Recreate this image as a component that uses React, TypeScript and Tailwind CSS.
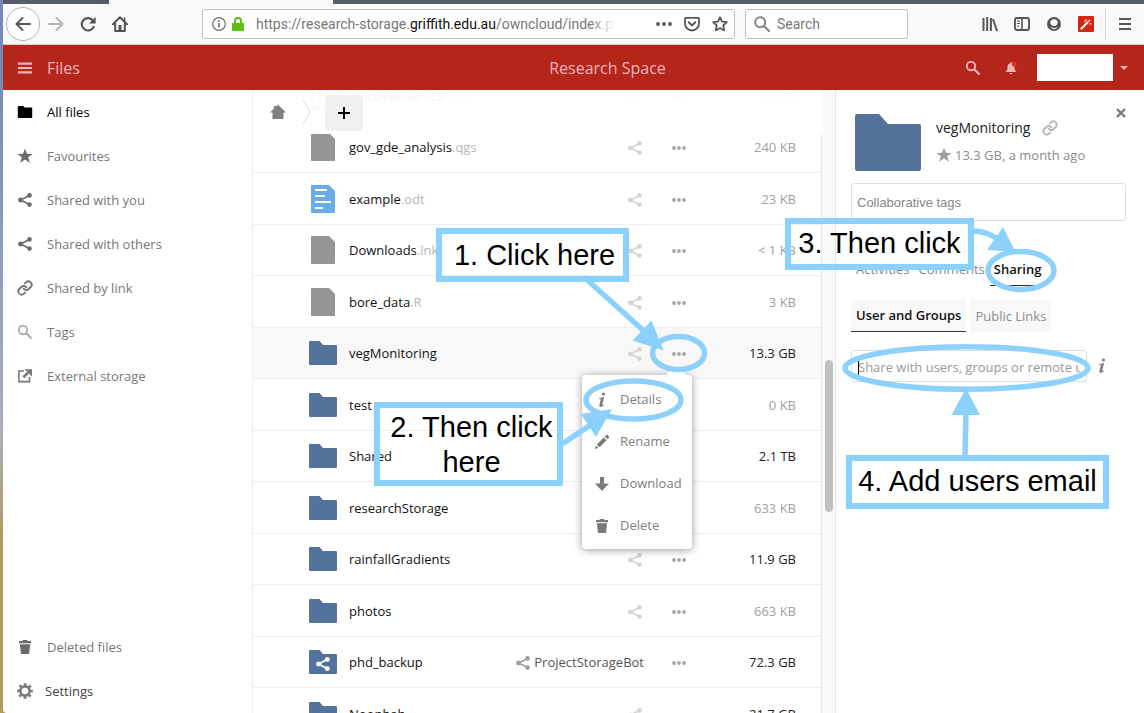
import React from "react";
import { Link as LinkIcon } from "lucide-react";

type IconProps = { className?: string };

const ShareIcon = ({ className = "" }: IconProps) => (
  <svg viewBox="0 0 14 14" className={"size-3.5 shrink-0 " + className} fill="currentColor" stroke="currentColor" aria-hidden>
    <path d="M11.5 2.4 2.5 7l9 4.6" fill="none" strokeWidth="1.7" />
    <g stroke="none">
      <circle cx="11.5" cy="2.4" r="2.3" />
      <circle cx="11.5" cy="11.6" r="2.3" />
      <circle cx="2.5" cy="7" r="2.4" />
    </g>
  </svg>
);

const StarIcon = ({ className = "" }: IconProps) => (
  <svg viewBox="0 0 16 16" className={"size-4 shrink-0 " + className} fill="currentColor" aria-hidden>
    <path d="m8 .6 2 5.1 5.6.2-4.4 3.4 1.6 5.4L8 11.6l-4.8 3.1 1.6-5.4L.4 5.9 6 5.7z" />
  </svg>
);

const MagnifierIcon = ({ className = "" }: IconProps) => (
  <svg viewBox="0 0 16 16" className={"size-4 shrink-0 " + className} fill="none" stroke="currentColor" aria-hidden>
    <circle cx="6" cy="6" r="4.2" strokeWidth="1.9" />
    <path d="m9 9 5.5 5.5" strokeWidth="2.3" />
  </svg>
);

const SmallFolderIcon = ({ className = "" }: IconProps) => (
  <svg viewBox="0 0 16 16" className={"size-4 shrink-0 " + className} fill="currentColor" aria-hidden>
    <path d="M1.6 2h4.6l1.6 1.6h6.6q.8 0 .8.8v8.8q0 .8-.8.8H1.6q-.8 0-.8-.8V2.8q0-.8.8-.8z" />
  </svg>
);

const ChainIcon = ({ className = "" }: IconProps) => (
  <LinkIcon className={"size-4 shrink-0 " + className} strokeWidth={2.8} aria-hidden />
);

const ExternalIcon = ({ className = "" }: IconProps) => (
  <svg viewBox="0 0 16 16" className={"size-4 shrink-0 " + className} fill="none" stroke="currentColor" aria-hidden>
    <path d="M7 3H1.9v10.6h10.6V9" strokeWidth="1.6" />
    <path d="M6.3 9.2 11 4.7" strokeWidth="2.6" />
    <path d="M7.5 1.2H15v7.2z" fill="currentColor" stroke="none" />
  </svg>
);

const TrashIcon = ({ className = "" }: IconProps) => (
  <svg viewBox="0 0 16 16" className={"size-4 shrink-0 " + className} fill="currentColor" aria-hidden>
    <path d="M6 1h4l.6 1H14v2.2H2V2h3.4zM2.8 5.2h10.4L12 15H4z" />
  </svg>
);

const GearIcon = ({ className = "" }: IconProps) => (
  <svg viewBox="0 0 16 16" className={"size-4 shrink-0 " + className} fill="none" stroke="currentColor" aria-hidden>
    <circle cx="8" cy="8" r="4.6" strokeWidth="2.6" />
    <circle cx="8" cy="8" r="6.7" strokeWidth="2.2" strokeDasharray="2.8 2.46" strokeDashoffset="1.4" />
  </svg>
);

const InfoIcon = ({ className = "" }: IconProps) => (
  <svg viewBox="0 0 16 16" className={"size-4 shrink-0 " + className} fill="currentColor" aria-hidden>
    <circle cx="9.5" cy="2" r="1.6" />
    <path d="M4.800 6.200 10.200 5 8.200 12.600c-.2.8.2.9 1.700-.3l.3.5C8.400 15.200 4.800 15.900 5.400 13l1.300-5.200c.2-.9 0-1.100-1.800-.9z" />
  </svg>
);

const PencilIcon = ({ className = "" }: IconProps) => (
  <svg viewBox="0 0 16 16" className={"size-4 shrink-0 " + className} fill="currentColor" aria-hidden>
    <path d="M12 1.200q.8-.8 1.600 0l1.200 1.200q.8.8 0 1.600l-1.300 1.300-2.800-2.800zM9.800 3.400l2.800 2.800-7 7-2.800-2.800zM2 11.400 4.600 14 1 15z" />
  </svg>
);

const DownloadIcon = ({ className = "" }: IconProps) => (
  <svg viewBox="0 0 16 16" className={"size-4 shrink-0 " + className} fill="currentColor" aria-hidden>
    <path d="M6 1h4v6.500h5L8 15 1 7.500h5z" />
  </svg>
);

const DotsIcon = ({ className = "" }: IconProps) => (
  <svg viewBox="0 0 14 14" className={"size-3.5 shrink-0 " + className} fill="currentColor" aria-hidden>
    <circle cx="2" cy="7" r="1.900" />
    <circle cx="7" cy="7" r="1.900" />
    <circle cx="12" cy="7" r="1.900" />
  </svg>
);

const CloseIcon = () => (
  <svg viewBox="0 0 10 10" className="size-2.5" fill="none" stroke="currentColor" strokeWidth="2.4" aria-hidden>
    <path d="m1 1 8 8M9 1 1 9" />
  </svg>
);

function Folder({ shared = false }: { shared?: boolean }) {
  return (
    <svg viewBox="0 0 28 24" className="h-6 w-7" aria-hidden>
      <path d="M1 0h9.500L14 4h13q1 0 1 1v18q0 1-1 1H1q-1 0-1-1V1q0-1 1-1z" fill="#54739c" />
      {shared && (
        <g fill="#fff" stroke="#fff">
          <path d="M18.500 9.300 9.500 14l9 4.700" fill="none" strokeWidth="1.800" />
          <circle cx="18.300" cy="9.400" r="2" />
          <circle cx="18.300" cy="18.600" r="2" />
          <circle cx="9.500" cy="14" r="2" />
        </g>
      )}
    </svg>
  );
}

function FileShape({ kind }: { kind: "plain" | "text" | "sheet" }) {
  const fill = kind === "text" ? "#68ace9" : kind === "sheet" ? "#9bc651" : "#969696";
  return (
    <svg viewBox="0 0 24 28" className="h-7 w-6" aria-hidden>
      <path d="M.8 0H18l6 6v21.200q0 .8-.8.8H.8q-.8 0-.8-.8V.8Q0 0 .8 0z" fill={fill} />
      {kind === "text" && <path d="M4 5h12M4 11h10M4 17h16M4 23h8" stroke="#fff" strokeWidth="2" />}
      {kind === "sheet" && <path d="M5 8h14v14H5zM5 15h14M12 8v14" stroke="#fff" strokeWidth="2" fill="none" />}
    </svg>
  );
}

type Row = {
  name: string;
  ext?: string;
  size: string;
  big?: boolean;
  kind: "plain" | "text" | "sheet" | "folder" | "shared";
  owner?: string;
  open?: boolean;
};

const rows: Row[] = [
  { name: "InactiveUsersLS", ext: ".xlsx", size: "28 KB", kind: "sheet" },
  { name: "gov_gde_analysis", ext: ".qgs", size: "240 KB", kind: "plain" },
  { name: "example", ext: ".odt", size: "23 KB", kind: "text" },
  { name: "Downloads", ext: ".lnk", size: "< 1 KB", kind: "plain" },
  { name: "bore_data", ext: ".R", size: "3 KB", kind: "plain" },
  { name: "vegMonitoring", size: "13.3 GB", big: true, kind: "folder", open: true },
  { name: "test", size: "0 KB", kind: "folder" },
  { name: "Shared", size: "2.1 TB", big: true, kind: "folder" },
  { name: "researchStorage", size: "633 KB", kind: "folder" },
  { name: "rainfallGradients", size: "11.9 GB", big: true, kind: "folder" },
  { name: "photos", size: "663 KB", kind: "folder" },
  { name: "phd_backup", size: "72.3 GB", big: true, kind: "shared", owner: "ProjectStorageBot" },
  { name: "Noonbah", size: "21.7 GB", big: true, kind: "folder" },
];

const menuItems = [
  { label: "Details", Icon: InfoIcon },
  { label: "Rename", Icon: PencilIcon },
  { label: "Download", Icon: DownloadIcon },
  { label: "Delete", Icon: TrashIcon },
];

function ActionsMenu() {
  return (
    <div className="absolute top-7 -right-1.5 z-10 w-[110px] rounded-sm bg-white pt-1 pb-0.5 shadow-[0_1px_8px_rgba(0,0,0,0.4)]">
      <svg viewBox="0 0 20 10" className="absolute -top-2.5 right-1.5 h-2.5 w-5" fill="#fff" aria-hidden>
        <path d="M0 10 10 0l10 10z" />
      </svg>
      {menuItems.map(({ label, Icon }) => (
        <button key={label} type="button" className="flex h-[42px] w-full items-center gap-2.5 pl-3 text-left text-[#808080]">
          <Icon className="text-[#7a7a7a]" />
          {label}
        </button>
      ))}
    </div>
  );
}

function FileRow({ row }: { row: Row }) {
  const cell = "border-b border-[#eee] p-0";
  return (
    <tr className={"odd:h-[52px] even:h-[51px] " + (row.open ? "bg-[#f8f8f8]" : "")}>
      <td className={cell}>
        <div className="flex items-center gap-3 pl-14">
          <span className="flex w-7 justify-center">
            {row.kind === "folder" || row.kind === "shared" ? <Folder shared={row.kind === "shared"} /> : <FileShape kind={row.kind} />}
          </span>
          <a href="#file" className="pt-0.5 text-[#111]">
            {row.name}
            {row.ext && <span className="text-[#b8b8b8]">{row.ext}</span>}
          </a>
        </div>
      </td>
      <td className={cell}>
        <div className="flex items-center justify-end gap-7 pt-0.5">
          {row.owner ? (
            <button type="button" className="flex items-center gap-1 text-[#555]">
              <ShareIcon className="text-[#a0a0a0]" />
              {row.owner}
            </button>
          ) : (
            <button type="button" aria-label="Share" className="pr-0.5 text-[#d4d4d4]">
              <ShareIcon />
            </button>
          )}
          <div className="relative flex">
            <button type="button" aria-label="Actions" className="text-[#a6a6a6]">
              <DotsIcon />
            </button>
            {row.open && <ActionsMenu />}
          </div>
        </div>
      </td>
      <td className={cell + " w-[135px] pt-0.5 pr-[25px] text-right whitespace-nowrap " + (row.big ? "text-[#222]" : "text-[#a0a0a0]")}>{row.size}</td>
    </tr>
  );
}

function BrowserBar() {
  return (
    <>
      <div className="flex h-1 shrink-0 bg-[#565b64]">
        <div className="ml-[106px] w-56 bg-[#f9f9fa]" />
      </div>
      <div className="flex h-[41px] shrink-0 items-center border-b border-[#d0d0d2] bg-[#f9f9fa] pl-[3px] pr-3 font-['Roboto',sans-serif] text-[#555]">
        <button type="button" aria-label="Back" className="flex size-[34px] items-center justify-center rounded-full border border-[#b4b4b4] bg-white">
          <svg viewBox="0 0 16 16" className="size-4" fill="none" stroke="currentColor" strokeWidth="2" strokeLinecap="round" strokeLinejoin="round">
            <path d="M15 8H1.500M7.500 2l-6 6 6 6" />
          </svg>
        </button>
        <button type="button" aria-label="Forward" className="ml-2 text-[#b8b8b8]">
          <svg viewBox="0 0 16 16" className="size-4" fill="none" stroke="currentColor" strokeWidth="2" strokeLinecap="round" strokeLinejoin="round">
            <path d="M1 8h13.500M8.500 2l6 6-6 6" />
          </svg>
        </button>
        <button type="button" aria-label="Reload" className="ml-4">
          <svg viewBox="0 0 16 16" className="size-4" fill="none" stroke="currentColor" strokeWidth="2.200">
            <path d="M13.200 4.800A6.200 6.200 0 1 0 14 10" />
            <path d="M15.600 1v6.500H9z" fill="currentColor" stroke="none" />
          </svg>
        </button>
        <button type="button" aria-label="Home" className="ml-4">
          <svg viewBox="0 0 16 16" className="size-4" fill="none" stroke="currentColor" strokeWidth="2" strokeLinejoin="round" strokeLinecap="round">
            <path d="M1 8.200 8 1.200l7 7M3.200 7.500V15h9.600V7.500" />
            <path d="M12.500 2v3" strokeWidth="1.600" />
            <path d="M8 9v6" strokeWidth="3" strokeLinecap="butt" />
          </svg>
        </button>
        <div className="ml-[74px] flex h-[30px] min-w-0 flex-1 items-center rounded-[3px] border border-[#c3c3c5] bg-white pl-[9px] pr-1.5">
          <svg viewBox="0 0 14 14" className="size-3.5 shrink-0 text-[#6a6a6a]" fill="none" stroke="currentColor" strokeWidth="1.200" aria-hidden>
            <circle cx="7" cy="7" r="6.300" />
            <path d="M7 6v4.200" strokeWidth="1.600" />
            <path d="M7 3.300v1.700" strokeWidth="1.600" />
          </svg>
          <svg viewBox="0 0 12 14" className="ml-1.5 h-3.5 w-3 shrink-0 text-[#5fbf10]" fill="currentColor" aria-hidden>
            <path d="M1 6h10q1 0 1 1v6q0 1-1 1H1q-1 0-1-1V7q0-1 1-1z" />
            <path d="M3 7V4a3 3 0 0 1 6 0v3" fill="none" stroke="currentColor" strokeWidth="2" />
          </svg>
          <div className="ml-3 min-w-0 flex-1 text-sm whitespace-nowrap text-[#777]">
            <span className="relative inline-block">
              https://research-storage.<span className="text-[#111]">griffith.edu.au</span>/owncloud/index.p
              <span className="absolute inset-y-0 right-0 w-6 bg-linear-to-r from-transparent to-white/90" />
            </span>
          </div>
          <button type="button" aria-label="Page actions" className="ml-3">
            <svg viewBox="0 0 16 16" className="size-4" fill="currentColor">
              <circle cx="2" cy="8" r="1.900" />
              <circle cx="8" cy="8" r="1.900" />
              <circle cx="14" cy="8" r="1.900" />
            </svg>
          </button>
          <button type="button" aria-label="Save to Pocket" className="ml-3">
            <svg viewBox="0 0 16 16" className="size-4" fill="none" stroke="currentColor" strokeWidth="1.800" strokeLinecap="round" strokeLinejoin="round">
              <path d="M2 1.800h12q1 0 1 1V7.500a7 7 0 0 1-14 0V2.800q0-1 1-1z" />
              <path d="m4.700 6.200 3.300 3.200 3.300-3.200" strokeWidth="2" />
            </svg>
          </button>
          <button type="button" aria-label="Bookmark" className="ml-3">
            <svg viewBox="0 0 16 16" className="size-4" fill="none" stroke="currentColor" strokeWidth="1.700" strokeLinejoin="round">
              <path d="m8 1.200 2 4.500 4.900.5-3.700 3.300 1.100 4.900L8 12l-4.300 2.400 1.100-4.900L1.100 6.200 6 5.700z" />
            </svg>
          </button>
        </div>
        <label className="ml-2.5 flex h-[30px] w-[163px] shrink-0 items-center gap-[7px] rounded-[3px] border border-[#c3c3c5] bg-white pl-2">
          <svg viewBox="0 0 16 16" className="size-4 shrink-0 text-[#858585]" fill="none" stroke="currentColor" strokeWidth="2" strokeLinecap="round" aria-hidden>
            <circle cx="6.200" cy="6.200" r="5" />
            <path d="m10 10 5 5" />
          </svg>
          <input type="text" aria-label="Search" placeholder="Search" className="w-24 bg-transparent text-sm outline-none placeholder:text-[#777]" />
        </label>
        <button type="button" aria-label="Library" className="ml-[74px]">
          <svg viewBox="0 0 16 16" className="size-4" fill="none" stroke="currentColor" strokeWidth="2">
            <path d="M1.500 2v13M5.200 1v14M8.900 2v13M11 3l4 12" />
          </svg>
        </button>
        <button type="button" aria-label="Sidebar" className="ml-4">
          <svg viewBox="0 0 16 16" className="size-4" fill="none" stroke="currentColor" strokeWidth="1.900">
            <rect x="1" y="2" width="14" height="12" rx="2" />
            <path d="M8 2v12" strokeWidth="1.600" />
            <path d="M3 5h3M3 7.500h3M3 10h2" strokeWidth="1" />
          </svg>
        </button>
        <button type="button" aria-label="Account" className="ml-4">
          <svg viewBox="0 0 16 16" className="size-4" fill="currentColor">
            <circle cx="8" cy="8" r="7" />
            <path d="M8 3.200c2.400 0 3.700 1.500 3.700 3.400S10.300 10 8 10 4.300 8.500 4.300 6.600 5.600 3.200 8 3.200z" fill="#f9f9fa" />
            <path d="M4 10.800q4 2.400 8 0-1.400 2.400-4 2.400t-4-2.400z" fill="#f9f9fa" />
          </svg>
        </button>
        <button type="button" aria-label="Wand extension" className="ml-4">
          <svg viewBox="0 0 16 16" className="size-4">
            <rect width="16" height="16" rx="1" fill="#d4250f" />
            <path d="m3.500 12.500 6-6" stroke="#fff" strokeWidth="2.200" strokeLinecap="round" />
            <path d="m10.500 5.500 1.500-1.500M8 3.500v1.200M12.500 7v1.500M6.500 5l.8.8" stroke="#fff" strokeWidth="1.400" />
          </svg>
        </button>
        <span className="ml-[11px] h-8 w-px bg-[#d8d8da]" />
        <button type="button" aria-label="Open menu" className="ml-3">
          <svg viewBox="0 0 14 14" className="size-3.5" stroke="currentColor" strokeWidth="2">
            <path d="M1 2h12M1 7h12M1 12h12" />
          </svg>
        </button>
      </div>
    </>
  );
}

function AppHeader() {
  return (
    <header className="flex h-[45px] shrink-0 items-center bg-[#b32619] pr-4 pl-[15px] text-base text-[#f0b4bd]">
      <button type="button" className="flex w-[232px] items-center gap-[15px]">
        <svg viewBox="0 0 14 14" className="size-3.5" stroke="currentColor" strokeWidth="2.200" aria-hidden>
          <path d="M0 2.600h14M0 7h14M0 11.400h14" />
        </svg>
        Files
      </button>
      <h1 className="flex-1 text-center">Research Space</h1>
      <button type="button" aria-label="Search">
        <MagnifierIcon />
      </button>
      <button type="button" aria-label="Notifications" className="ml-5 flex w-5 justify-center">
        <svg viewBox="0 0 14 14" className="size-3.5" fill="currentColor">
          <path d="M7 1.200q1 0 1 1Q10.600 3 10.600 6v2.500L12.500 11h-11l1.900-2.500V6Q3.400 3 6 2.200q0-1 1-1zM5.500 12h3q-.3 1.300-1.500 1.300T5.500 12z" />
          <circle cx="10.300" cy="3.200" r="2.400" fill="#f02a10" />
        </svg>
      </button>
      <button type="button" aria-label="User menu" className="ml-4 flex items-center gap-[7px]">
        <span className="h-[27px] w-[76px] bg-white" />
        <svg viewBox="0 0 8 4" className="h-1 w-2" fill="currentColor">
          <path d="M0 0h8L4 4z" />
        </svg>
      </button>
    </header>
  );
}

const navItems = [
  { label: "All files", Icon: SmallFolderIcon, tone: "text-black", text: "text-black" },
  { label: "Favourites", Icon: StarIcon, tone: "text-[#6b6b6b]", text: "text-[#777]" },
  { label: "Shared with you", Icon: ShareIcon, tone: "text-[#6b6b6b]", text: "text-[#777]" },
  { label: "Shared with others", Icon: ShareIcon, tone: "text-[#6b6b6b]", text: "text-[#777]" },
  { label: "Shared by link", Icon: ChainIcon, tone: "text-[#777]", text: "text-[#777]" },
  { label: "Tags", Icon: MagnifierIcon, tone: "text-[#b0b0b0]", text: "text-[#777]" },
  { label: "External storage", Icon: ExternalIcon, tone: "text-[#777]", text: "text-[#777]" },
];

function Sidebar() {
  return (
    <nav className="flex w-[250px] shrink-0 flex-col border-r border-[#eee] bg-white">
      {navItems.map(({ label, Icon, tone, text }) => (
        <a key={label} href="#nav" className={"flex h-11 items-center gap-3.5 pl-3.5 " + text}>
          <span className="flex w-4 justify-center">
            <Icon className={tone} />
          </span>
          <span className="pt-0.5">{label}</span>
        </a>
      ))}
      <a href="#deleted" className="mt-auto flex h-11 items-center gap-3.5 pl-3.5 text-[#777]">
        <TrashIcon className="text-[#6b6b6b]" />
        <span className="pt-0.5">Deleted files</span>
      </a>
      <button type="button" className="flex h-11 items-center gap-3 pl-3.5 text-left text-[#444]">
        <GearIcon className="text-[#777]" />
        <span className="pt-0.5">Settings</span>
      </button>
    </nav>
  );
}

function FileList() {
  return (
    <main className="relative flex min-w-0 flex-1 overflow-hidden bg-white">
      <div className="-mt-5 flex-1 border-r border-[#e6e6e6]">
        <table className="w-full border-separate border-spacing-0">
          <tbody>
            {rows.map((row) => (
              <FileRow key={row.name} row={row} />
            ))}
          </tbody>
        </table>
      </div>
      <div className="flex w-[13px] shrink-0 justify-center bg-[#fafafa] pt-[270px]">
        <div className="h-[152px] w-2 rounded-full bg-[#c1c1c1]" />
      </div>
      <div className="absolute inset-x-0 top-0 mr-[13px] flex h-11 items-center bg-white/95 pl-[17px]">
        <button type="button" aria-label="Home">
          <svg viewBox="0 0 16 16" className="size-4 text-[#808080]" fill="currentColor">
            <path d="M8 .8 16 8.500h-2.500V15h-11V8.500H0L4 4.600V2h2.500v.3z" />
          </svg>
        </button>
        <svg viewBox="0 0 9 24" className="ml-4 h-6 w-[9px] text-[#dcdcdc]" fill="none" stroke="currentColor" aria-hidden>
          <path d="m1 0 7 12-7 12" />
        </svg>
        <button type="button" aria-label="New" className="mt-0.5 ml-3.5 flex h-9 w-[38px] items-center justify-center rounded-sm bg-[#f0f0f0]">
          <svg viewBox="0 0 12 12" className="size-3" stroke="#000" strokeWidth="2" aria-hidden>
            <path d="M6 0v12M0 6h12" />
          </svg>
        </button>
      </div>
    </main>
  );
}

function DetailsPanel() {
  return (
    <aside className="w-[309px] shrink-0 border-l border-[#e6e6e6] bg-white pr-[18px] pl-[15px]">
      <div className="flex pt-6 pl-1">
        <svg viewBox="0 0 66 57" className="h-[57px] w-[66px]" aria-hidden>
          <path d="M2 0h22l9 10h31q2 0 2 2v43q0 2-2 2H2q-2 0-2-2V2q0-2 2-2z" fill="#54739c" />
        </svg>
        <div className="ml-[15px] flex-1 pt-1">
          <h2 className="flex items-center gap-3 text-sm leading-5 text-[#222]">
            vegMonitoring
            <ChainIcon className="text-[#b8b8b8]" />
          </h2>
          <p className="mt-[7px] flex items-center gap-[3px] leading-5 text-[#8c8c8c]">
            <StarIcon className="text-[#a0a0a0]" />
            13.3 GB, a month ago
          </p>
        </div>
        <button type="button" aria-label="Close" className="-mt-1.5 self-start text-[#7a7a7a]">
          <CloseIcon />
        </button>
      </div>
      <input
        type="text"
        aria-label="Collaborative tags"
        placeholder="Collaborative tags"
        className="mt-3 h-[38px] w-full rounded-[3px] border border-[#ddd] px-[5px] font-['Liberation_Sans',Arial,sans-serif] text-[13px] outline-none placeholder:text-[#888]"
      />
      <div className="mt-[33px] flex gap-[5px] pl-[5px] text-[#888]">
        <button type="button" className="h-8 pr-1">Activities</button>
        <button type="button" className="h-8">Comments</button>
        <button type="button" className="h-8 border-b border-[#333] px-1 font-semibold text-[#111]">Sharing</button>
      </div>
      <div className="mt-[14px] flex gap-1">
        <button type="button" className="h-8 border-b border-[#333] bg-[#f8f8f8] px-[5px] pt-px font-semibold text-[#111]">User and Groups</button>
        <button type="button" className="h-8 bg-[#f8f8f8] px-[5px] pt-px text-[#8c8c8c]">Public Links</button>
      </div>
      <div className="mt-[18px] flex items-center gap-[7px]">
        <div className="relative w-[236px]">
          <input
            type="text"
            aria-label="Share with users, groups or remote users"
            placeholder="Share with users, groups or remote users"
            className="h-8 w-full rounded-[3px] border border-[#ddd] px-1.5 pt-0.5 outline-none placeholder:text-[#999]"
          />
          <span className="absolute top-2.5 left-[7px] h-4 w-px bg-black" />
        </div>
        <InfoIcon className="text-[#808080]" />
      </div>
    </aside>
  );
}

const callouts = [
  { text: "1. Click here", box: "left-[436px] top-[228px] h-[54px] w-[193px] pl-1" },
  { text: "2. Then click here", box: "left-[374px] top-[402px] h-[84px] w-[189px] pt-0.5 pl-1.5" },
  { text: "3. Then click", box: "left-[785px] top-[218px] h-[52px] w-[189px] pb-0.5" },
  { text: "4. Add users email", box: "left-[846px] top-[455px] h-[54px] w-[263px] pb-0.5" },
];

function Annotations() {
  return (
    <div className="pointer-events-none absolute inset-0 z-20 overflow-hidden">
      <svg className="absolute top-0 left-0" width="1144" height="713" fill="none" stroke="#8cd1fc" strokeWidth="5.500" aria-hidden>
        <ellipse cx="678.500" cy="353" rx="26" ry="16.500" />
        <ellipse cx="633.500" cy="400" rx="47.500" ry="19" />
        <ellipse cx="1021" cy="270.500" rx="33" ry="19" />
        <ellipse cx="966.500" cy="368" rx="121.500" ry="21.300" />
        <path d="m584 277 60 54M562 444l30-20M973 231q16 0 28 11M965 456l1-44" />
        <g fill="#8cd1fc" stroke="none">
          <path d="m663.500 350.500-31-10 19-20z" />
          <path d="m612 409-31 5 15 23z" />
          <path d="m1015.500 252-12.500-25-16 23z" />
          <path d="m966 388-14.500 27H980z" />
        </g>
      </svg>
      {callouts.map(({ text, box }) => (
        <div
          key={text}
          className={
            "absolute flex items-center justify-center border-6 border-[#8cd1fc] text-center font-['Liberation_Sans',Arial,sans-serif] text-[29px] leading-[35px] text-black " +
            box
          }
        >
          {text}
        </div>
      ))}
    </div>
  );
}

export default function App() {
  return (
    <div className="relative flex h-screen overflow-hidden bg-linear-to-b from-[#7688b8] from-10% via-[#a9b1bd] via-60% to-[#b09a5e] to-75% pl-[3px] font-['Open_Sans','Noto_Sans',sans-serif] text-[13px] text-[#222]">
      <div className="flex min-w-0 flex-1 flex-col overflow-hidden rounded-bl">
        <BrowserBar />
        <AppHeader />
        <div className="flex min-h-0 flex-1">
          <Sidebar />
          <FileList />
          <DetailsPanel />
        </div>
      </div>
      <Annotations />
    </div>
  );
}
